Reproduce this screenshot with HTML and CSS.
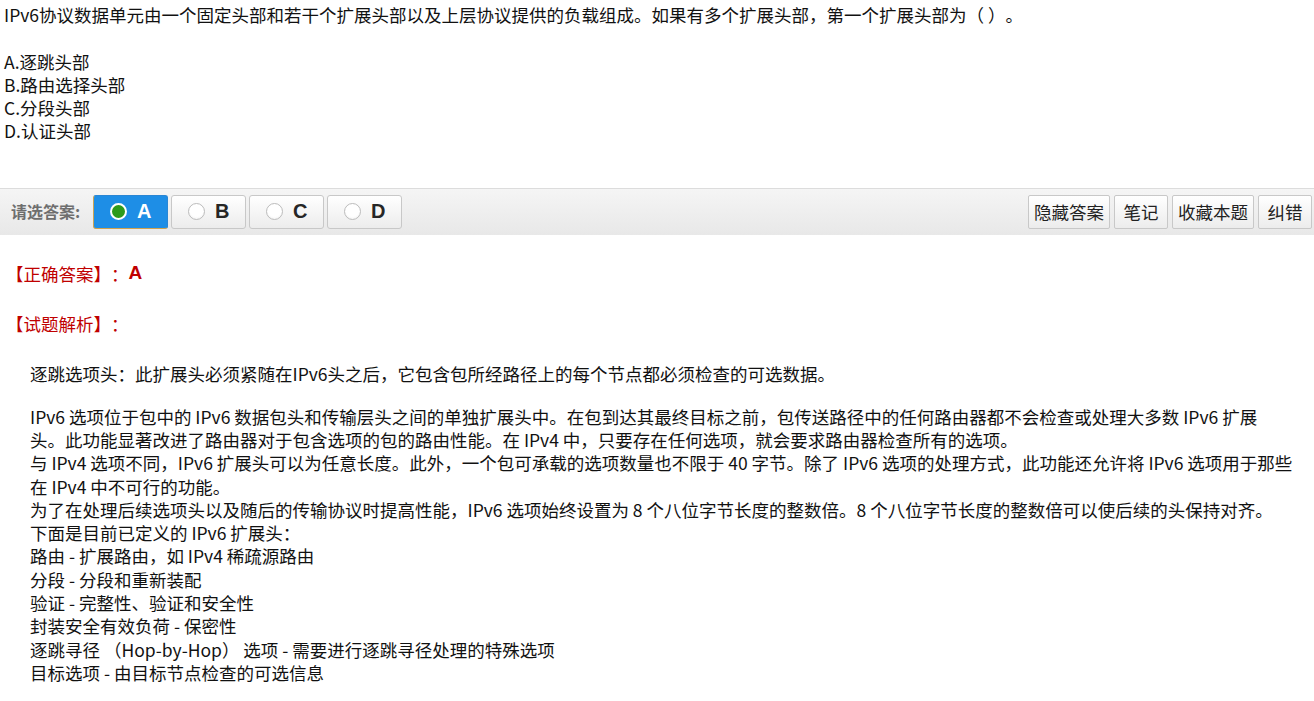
FILE: index.html
```html
<!DOCTYPE html>
<html lang="zh-CN">
<head>
<meta charset="utf-8">
<title>试题</title>
<link rel="stylesheet" href="styles.css">
</head>
<body>
<div class="question">
  <div class="stem">IPv6协议数据单元由一个固定头部和若干个扩展头部以及上层协议提供的负载组成。如果有多个扩展头部，第一个扩展头部为（ ）。</div>
  <div class="options">
    <div>A.逐跳头部</div>
    <div>B.路由选择头部</div>
    <div>C.分段头部</div>
    <div>D.认证头部</div>
  </div>
</div>

<div class="bar">
  <div class="choose">
    <span class="choose-label">请选答案:</span>
    <button class="opt opt-active"><span class="radio radio-on"></span><span class="letter">A</span></button>
    <button class="opt"><span class="radio"></span><span class="letter">B</span></button>
    <button class="opt"><span class="radio"></span><span class="letter">C</span></button>
    <button class="opt"><span class="radio"></span><span class="letter">D</span></button>
  </div>
  <div class="tools">
    <button class="tool">隐藏答案</button>
    <button class="tool">笔记</button>
    <button class="tool">收藏本题</button>
    <button class="tool">纠错</button>
  </div>
</div>

<div class="answer">
  <div class="ans-row"><span class="red">【正确答案】：</span><span class="ans-letter">A</span></div>
  <div class="ans-row ans-row-2"><span class="red">【试题解析】：</span></div>
  <div class="analysis">
    <p class="para">逐跳选项头：此扩展头必须紧随在IPv6头之后，它包含包所经路径上的每个节点都必须检查的可选数据。</p>
    <p class="para">IPv6 选项位于包中的 IPv6 数据包头和传输层头之间的单独扩展头中。在包到达其最终目标之前，包传送路径中的任何路由器都不会检查或处理大多数 IPv6 扩展<br>头。此功能显著改进了路由器对于包含选项的包的路由性能。在 IPv4 中，只要存在任何选项，就会要求路由器检查所有的选项。<br>与 IPv4 选项不同，IPv6 扩展头可以为任意长度。此外，一个包可承载的选项数量也不限于 40 字节。除了 IPv6 选项的处理方式，此功能还允许将 IPv6 选项用于那些在 IPv4 中不可行的功能。<br>为了在处理后续选项头以及随后的传输协议时提高性能，IPv6 选项始终设置为 8 个八位字节长度的整数倍。8 个八位字节长度的整数倍可以使后续的头保持对齐。<br>下面是目前已定义的 IPv6 扩展头：<br>路由 - 扩展路由，如 IPv4 稀疏源路由<br>分段 - 分段和重新装配<br>验证 - 完整性、验证和安全性<br>封装安全有效负荷 - 保密性<br>逐跳寻径 （Hop-by-Hop） 选项 - 需要进行逐跳寻径处理的特殊选项<br>目标选项 - 由目标节点检查的可选信息</p>
  </div>
</div>
</body>
</html>
```

FILE: styles.css
```css
html, body {
  margin: 0;
  padding: 0;
  background: #fff;
}
body {
  font-family: "Microsoft YaHei", "Noto Sans CJK SC", "Noto Sans", sans-serif;
  font-size: 17.5px;
  line-height: 23.3px;
  color: #111;
  text-spacing-trim: space-all;
}
.question {
  padding: 3px 0 0 4px;
}
.stem {
  margin-bottom: 23.3px;
}
.options {
  margin-bottom: 45px;
}
.bar {
  display: flex;
  justify-content: space-between;
  align-items: center;
  height: 46px;
  border-top: 1px solid #dcdcdc;
  background: linear-gradient(#f5f5f5, #e8e8e8);
  padding: 0 2px 0 11px;
}
.choose {
  display: flex;
  align-items: center;
  gap: 3px;
}
.choose-label {
  font-size: 16px;
  font-weight: bold;
  color: #6e6e6e;
  margin-right: 10px;
}
button {
  font-family: inherit;
  margin: 0;
  cursor: pointer;
}
.opt {
  display: flex;
  align-items: center;
  justify-content: center;
  gap: 10px;
  width: 75px;
  height: 34px;
  padding: 0;
  border: 1px solid #c8c8c8;
  border-radius: 3px;
  background: linear-gradient(#ffffff, #ececec);
}
.opt-active {
  background: #1e8ee6;
  border-color: #2a86d4;
  border-bottom-color: #cfa24e;
  border-left-color: #c9a456;
}
.radio {
  display: block;
  width: 17px;
  height: 17px;
  box-sizing: border-box;
  border-radius: 50%;
  border: 1px solid #bcbcbc;
  background: radial-gradient(circle at 50% 40%, #ffffff 55%, #ececec);
}
.radio-on {
  border: 2.5px solid #fff;
  background: #2c9a1c;
}
.letter {
  font-family: "Liberation Sans", Arial, sans-serif;
  font-weight: bold;
  font-size: 20px;
  color: #262626;
}
.opt-active .letter {
  color: #fff;
}
.tools {
  display: flex;
  align-items: center;
  gap: 4px;
}
.tool {
  height: 34px;
  min-width: 54px;
  padding: 0 5px;
  font-size: 17.5px;
  color: #222;
  border: 1px solid #c8c8c8;
  border-radius: 2px;
  background: linear-gradient(#ffffff, #ececec);
}
.answer {
  padding: 26px 0 0 6px;
}
.ans-row {
  height: 23.3px;
}
.ans-row-2 {
  margin-top: 28px;
}
.red {
  color: #c00000;
}
.ans-letter {
  color: #c00000;
  font-family: "Liberation Sans", Arial, sans-serif;
  font-weight: bold;
  font-size: 19px;
  margin-left: 0;
  vertical-align: 2px;
}
.analysis {
  padding: 27px 10px 0 24px;
}
.para {
  margin: 0 0 19px;
}
```
